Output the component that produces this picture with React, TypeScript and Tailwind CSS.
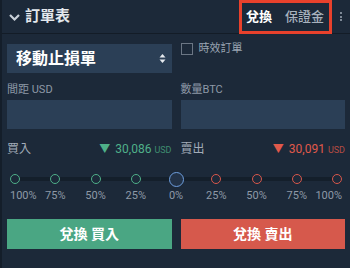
import React from "react";

const font = { fontFamily: "Roboto, 'Noto Sans CJK TC', sans-serif" };

const pcts = ["100%", "75%", "50%", "25%", "0%", "25%", "50%", "75%", "100%"];

export default function App() {
  return (
    <div
      className="w-[350px] h-[268px] bg-[#1c2939] border-l-2 border-[#141e2a] relative overflow-hidden text-[#9aa5b3]"
      style={font}
    >
      {/* header */}
      <div className="h-[34px] border-b border-[#131c27] flex items-center pl-[6px] pr-[8px]">
        <svg width="13" height="10" viewBox="0 0 13 10" className="mr-[4px]">
          <path d="M2 3 L6.5 7.5 L11 3" stroke="#c9d0d9" strokeWidth="2.2" fill="none" />
        </svg>
        <span className="text-[15px] font-bold text-[#e3e7ec] leading-none">訂單表</span>
        <div className="ml-auto flex items-center">
          <span className="text-[13px] font-bold text-white leading-none">兌換</span>
          <span className="text-[13px] font-medium text-[#a8b2be] leading-none ml-[13px]">保證金</span>
          <span className="ml-[16px] flex flex-col gap-[1.5px] items-center">
            <span className="w-[2px] h-[2px] bg-[#7d8896]" />
            <span className="w-[2px] h-[2px] bg-[#7d8896]" />
            <span className="w-[2px] h-[2px] bg-[#7d8896]" />
          </span>
        </div>
      </div>
      {/* annotation box */}
      <div className="absolute left-[237px] top-0 w-[93px] h-[34px] border-[3px] border-[#e8412c]" />

      <div className="pl-[5px] pr-[5px]">
        <div className="grid grid-cols-2 gap-x-[9px]">
          {/* select */}
          <div className="mt-[10px] h-[29px] bg-[#2b3f56] flex items-center pl-[9px] pr-[6px]">
            <span className="text-[16px] font-bold text-white leading-none">移動止損單</span>
            <svg width="7" height="11" viewBox="0 0 7 11" className="ml-auto">
              <path d="M0.5 4.5 L3.5 1 L6.5 4.5 Z" fill="#e6eaef" />
              <path d="M0.5 6.5 L3.5 10 L6.5 6.5 Z" fill="#e6eaef" />
            </svg>
          </div>
          <div className="mt-[8px] h-[29px] flex items-start">
            <div className="w-[12px] h-[12px] border border-[#6b7684] mt-[1px]" />
            <span className="ml-[6px] text-[11px] leading-[14px] text-[#9aa5b3]">時效訂單</span>
          </div>

          {/* labels */}
          <div className="mt-[10px] h-[17px] text-[11px] leading-[14px] text-[#8e99a7]">間距 USD</div>
          <div className="mt-[10px] h-[17px] text-[11px] leading-[14px] text-[#8e99a7]">數量BTC</div>

          {/* inputs */}
          <div className="h-[29px] bg-[#2b3f56]" />
          <div className="h-[29px] bg-[#2b3f56]" />

          {/* price row */}
          <div className="mt-[13px] flex items-center h-[14px]">
            <span className="text-[12px] text-[#a2acb8]">買入</span>
            <span className="ml-auto flex items-baseline text-[#4fb089]">
              <span className="text-[11px] mr-[5px]">▼</span>
              <span className="text-[12px]">30,086</span>
              <span className="text-[9px] ml-[3px] text-[#3f8c70]">USD</span>
            </span>
          </div>
          <div className="mt-[13px] flex items-center h-[14px]">
            <span className="text-[12px] text-[#a2acb8]">賣出</span>
            <span className="ml-auto flex items-baseline text-[#e0594b]">
              <span className="text-[11px] mr-[5px]">▼</span>
              <span className="text-[12px]">30,091</span>
              <span className="text-[9px] ml-[3px] text-[#b64c43]">USD</span>
            </span>
          </div>
        </div>

        {/* slider */}
        <div className="relative mt-[16px] h-[14px] flex items-center justify-between px-[3px]">
          <div className="absolute left-[6px] right-[3px] top-[5px] h-[4px] bg-[#141f2b]" />
          {pcts.map((p, i) => {
            const center = i === 4;
            const color = i < 4 ? "border-[#4fb089]" : i > 4 ? "border-[#d9574b]" : "border-[#6e9fdf]";
            return (
              <div key={i} className="relative w-[10px] h-[10px] flex items-center justify-center">
                <div
                  className={
                    center
                      ? `w-[15px] h-[15px] rounded-full border-[1.5px] ${color} bg-[#223247] shrink-0`
                      : `w-[10px] h-[10px] rounded-full border-[1.5px] ${color} bg-[#1c2939] shrink-0`
                  }
                />
              </div>
            );
          })}
        </div>
        <div className="mt-[4px] flex justify-between px-[3px] text-[11px] leading-[12px] text-[#8e99a7]">
          {pcts.map((p, i) => (
            <div
              key={i}
              className={`w-[10px] flex whitespace-nowrap ${i === 0 ? "justify-start" : i === 8 ? "justify-end" : "justify-center"}`}
            >
              {p}
            </div>
          ))}
        </div>

        {/* buttons */}
        <div className="grid grid-cols-2 gap-x-[9px] mt-[17px]">
          <div className="h-[30px] bg-[#4aa683] flex items-center justify-center text-[14px] font-bold text-white">
            兌換 買入
          </div>
          <div className="h-[30px] bg-[#d6594c] flex items-center justify-center text-[14px] font-bold text-white">
            兌換 賣出
          </div>
        </div>
      </div>
    </div>
  );
}
